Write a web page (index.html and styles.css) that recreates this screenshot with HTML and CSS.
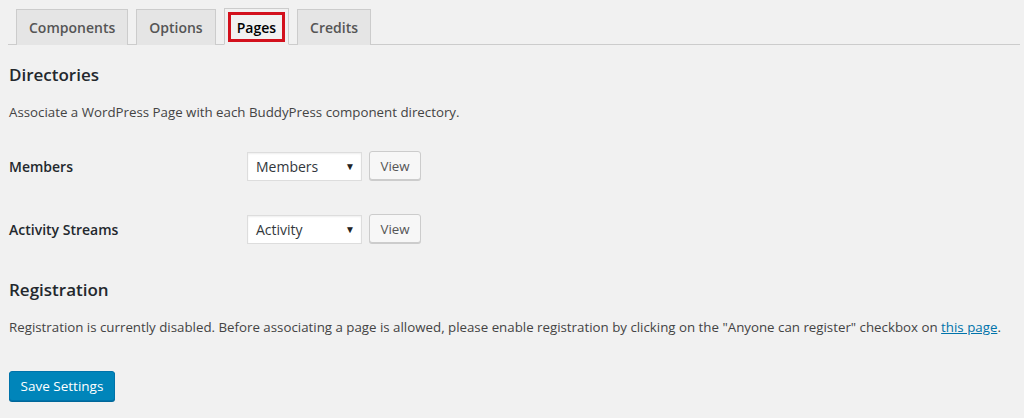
FILE: index.html
```html
<!DOCTYPE html>
<html>
<head>
<meta charset="utf-8">
<link rel="stylesheet" href="styles.css">
</head>
<body>
<div class="wrap">
  <nav class="tabs">
    <a class="tab">Components</a>
    <a class="tab">Options</a>
    <a class="tab active"><span class="mark">Pages</span></a>
    <a class="tab">Credits</a>
  </nav>
  <div class="content">
    <h2 class="title first">Directories</h2>
    <p class="desc">Associate a WordPress Page with each BuddyPress component directory.</p>
    <div class="row">
      <div class="label">Members</div>
      <div class="field">
        <div class="select"><span>Members</span><span class="arrow">&#9660;</span></div>
        <button class="btn">View</button>
      </div>
    </div>
    <div class="row">
      <div class="label">Activity Streams</div>
      <div class="field">
        <div class="select"><span>Activity</span><span class="arrow">&#9660;</span></div>
        <button class="btn">View</button>
      </div>
    </div>
    <h2 class="title">Registration</h2>
    <p class="desc">Registration is currently disabled. Before associating a page is allowed, please enable registration by clicking on the "Anyone can register" checkbox on <a class="link">this page</a>.</p>
    <button class="primary">Save Settings</button>
  </div>
</div>
</body>
</html>
```
FILE: styles.css
```css
html, body {
  margin: 0;
  padding: 0;
  background: #f1f1f1;
  height: 100%;
}
body {
  font-family: "Open Sans", "Noto Sans", sans-serif;
  font-size: 13.3px;
  color: #444;
}
.wrap {
  padding: 8px 4px 0 8px;
}
.tabs {
  display: flex;
  gap: 8px;
  padding-left: 8px;
  border-bottom: 1px solid #ccc;
  height: 36px;
  align-items: flex-end;
}
.tab {
  box-sizing: border-box;
  height: 36px;
  margin-bottom: -1px;
  padding: 0 12px;
  display: flex;
  align-items: center;
  justify-content: center;
  border: 1px solid #ccc;
  border-bottom: none;
  background: #e5e5e5;
  color: #555;
  font-size: 14px;
  font-weight: 600;
}
.tab.active {
  background: #f1f1f1;
  color: #000;
  border-bottom: 1px solid #f1f1f1;
  padding: 0 3px;
  height: 37px;
}
.mark {
  box-sizing: border-box;
  display: flex;
  align-items: center;
  height: 30px;
  padding: 0 6px;
  border: 3px solid #d3111d;
  margin-top: 1px;
}
.content {
  padding-left: 1px;
}
.title {
  margin: 0;
  font-size: 17px;
  font-weight: 600;
  color: #23282d;
  line-height: 24px;
}
.title.first {
  margin-top: 18px;
}
.desc {
  margin: 15px 0 0;
  line-height: 20px;
  color: #444;
}
.row {
  display: flex;
  align-items: center;
  height: 30px;
  margin-top: 29px;
}
.row + .row {
  margin-top: 33px;
}
.label {
  width: 238px;
  font-size: 14px;
  font-weight: 600;
  color: #23282d;
}
.field {
  display: flex;
  gap: 7px;
  align-items: center;
}
.select {
  box-sizing: border-box;
  width: 115px;
  height: 29px;
  background: #fff;
  border: 1px solid #ddd;
  box-shadow: inset 0 1px 2px rgba(0,0,0,0.07);
  display: flex;
  align-items: center;
  justify-content: space-between;
  padding: 0 6px 0 8px;
  font-size: 14px;
  color: #32373c;
}
.arrow {
  font-size: 10px;
  color: #222;
}
.btn {
  box-sizing: border-box;
  height: 29px;
  width: 52px;
  background: #f7f7f7;
  border: 1px solid #ccc;
  border-radius: 3px;
  box-shadow: 0 1px 0 #ccc;
  font-family: inherit;
  font-size: 13.3px;
  color: #555;
  padding: 0;
  margin-top: -1px;
}
.row + .title {
  margin-top: 34px;
}
.link {
  color: #0073aa;
  text-decoration: underline;
}
.primary {
  margin-top: 34px;
  box-sizing: border-box;
  width: 106px;
  height: 30px;
  background: #0085ba;
  border: 1px solid #0073aa;
  border-radius: 3px;
  box-shadow: 0 1px 0 #006799;
  color: #fff;
  font-family: inherit;
  font-size: 13.5px;
  padding: 0;
}
```
